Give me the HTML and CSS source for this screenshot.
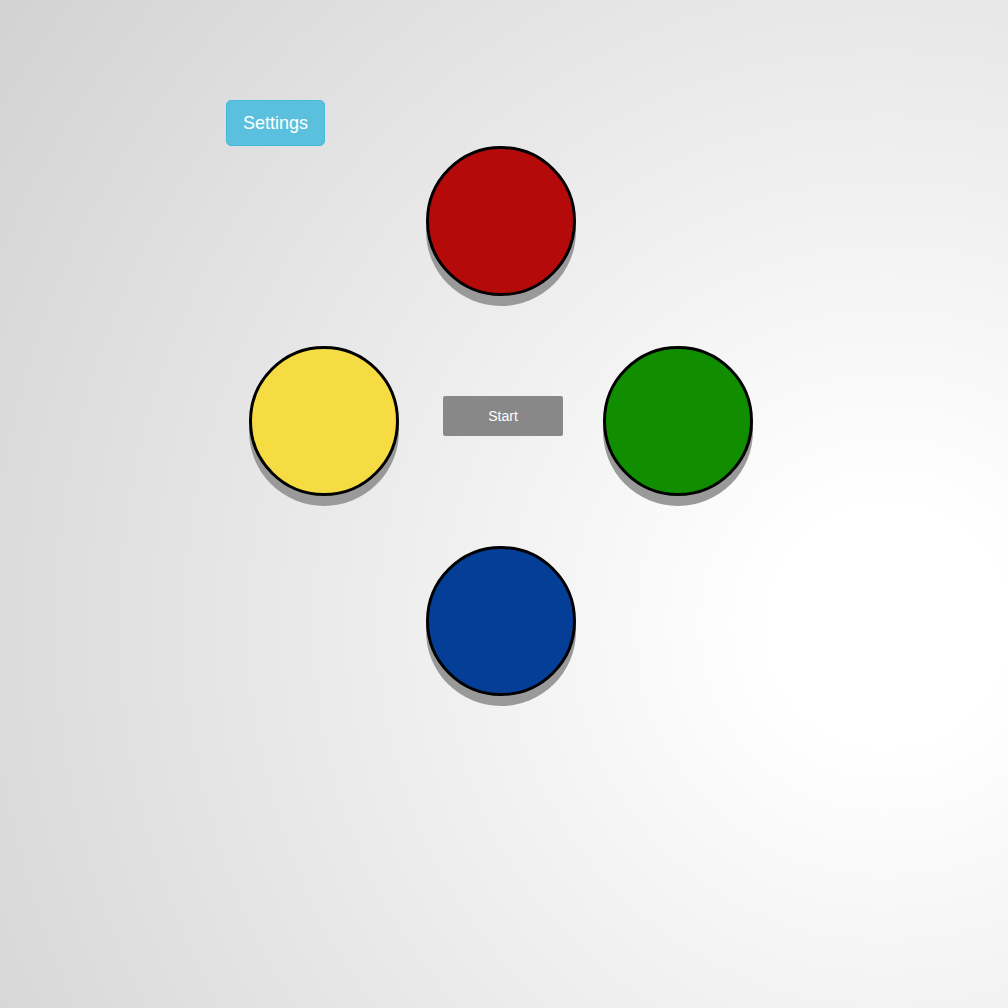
FILE: index.html
```html
<!DOCTYPE html>
<html>
<head>
<meta charset="utf-8">
<link rel="stylesheet" href="styles.css">
</head>
<body>
<div class="page">
  <button class="settings">Settings</button>
  <div class="board">
    <div class="pad red cell-top"></div>
    <div class="pad yellow cell-left"></div>
    <div class="center"><button class="start">Start</button></div>
    <div class="pad green cell-right"></div>
    <div class="pad blue cell-bottom"></div>
  </div>
</div>
</body>
</html>
```
FILE: styles.css
```css
html, body {
  margin: 0;
  height: 100%;
}
body {
  background: radial-gradient(circle at 88% 62%, #ffffff 0, #ffffff 120px, #cfcfcf 1150px);
  font-family: "Liberation Sans", Arial, sans-serif;
}
.page {
  padding: 100px 0 0 226px;
  display: flex;
  flex-direction: column;
  align-items: flex-start;
}
.settings {
  background: #5bc0de;
  border: 1px solid #46b8da;
  color: #fff;
  font-family: "Liberation Sans", Arial, sans-serif;
  font-size: 18px;
  line-height: 24px;
  padding: 10px 16px;
  border-radius: 5px;
  margin: 0;
}
.board {
  margin: 0 0 0 23px;
  display: grid;
  grid-template-columns: 150px 150px 150px;
  grid-template-rows: 150px 150px 150px;
  column-gap: 27px;
  row-gap: 50px;
}
.pad {
  box-sizing: border-box;
  width: 150px;
  height: 150px;
  border-radius: 50%;
  border: 3px solid #000;
  box-shadow: 0 10px 0 #999;
}
.red { background: #b40b0a; }
.yellow { background: #f5dc42; }
.green { background: #108e00; }
.blue { background: #053e97; }
.cell-top { grid-column: 2; grid-row: 1; }
.cell-left { grid-column: 1; grid-row: 2; }
.center {
  grid-column: 2; grid-row: 2;
  display: flex;
  align-items: center;
  justify-content: center;
  padding: 0 0 10px 4px;
}
.cell-right { grid-column: 3; grid-row: 2; }
.cell-bottom { grid-column: 2; grid-row: 3; }
.start {
  width: 120px;
  height: 40px;
  background: #888;
  color: #fff;
  border: none;
  border-radius: 2px;
  font-family: "Liberation Sans", Arial, sans-serif;
  font-size: 14px;
  margin: 0;
  padding: 0;
}
```
